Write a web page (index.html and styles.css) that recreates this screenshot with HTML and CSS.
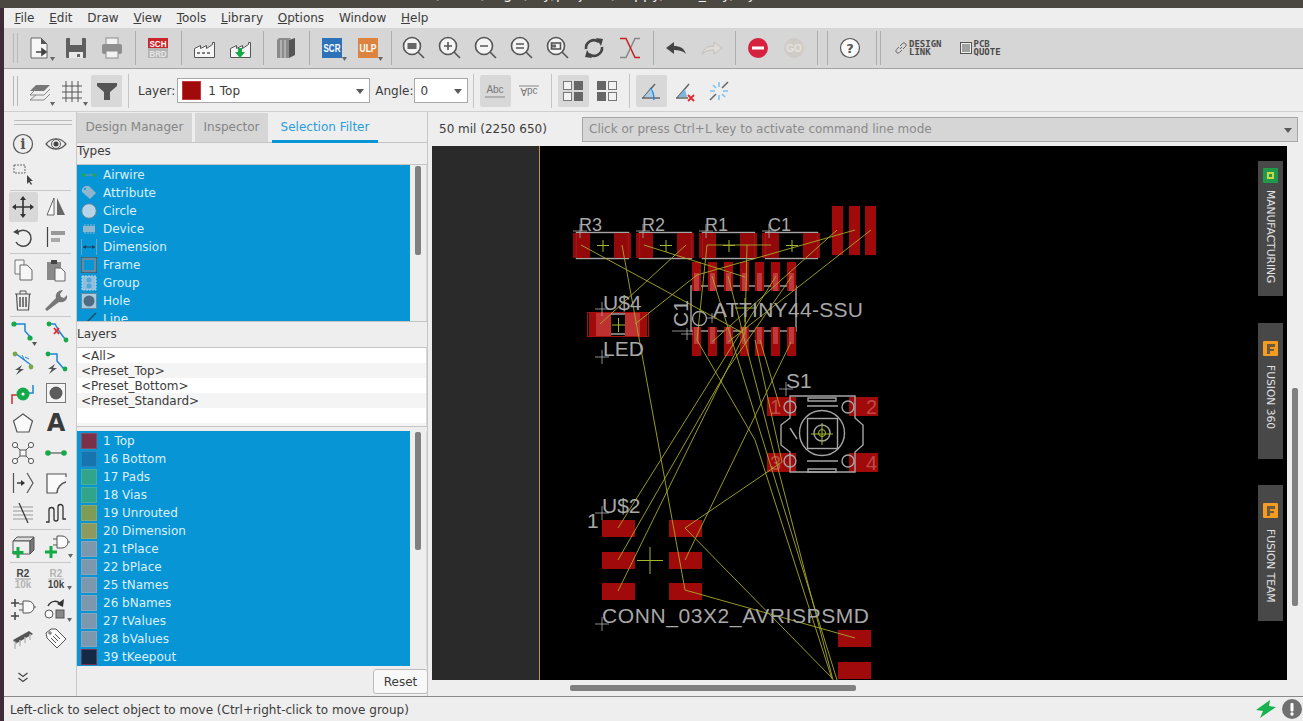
FILE: index.html
```html
<!DOCTYPE html>
<html lang="en">
<head>
  <meta charset="UTF-8">
  <title>Board - EAGLE</title>
  <link rel="stylesheet" href="styles.css">
</head>
<body>
  <div class="titlebar"><span>/home/eagle/my/projects/happy/hello_key/layout.brd - EAGLE</span></div>
  <div class="app">
    <div class="desktop-strip"></div>
    <div class="window">

      <div class="menubar">
        <span><u>F</u>ile</span><span><u>E</u>dit</span><span>Draw</span><span><u>V</u>iew</span><span><u>T</u>ools</span><span><u>L</u>ibrary</span><span><u>O</u>ptions</span><span>Window</span><span><u>H</u>elp</span>
      </div>

      <!-- main toolbar -->
      <div class="toolbar tb-main">
        <div class="grip"></div>
        <div class="tbtn"><svg viewBox="0 0 32 32"><path d="M7 6h10l6 6v14H7z" fill="#f7f7f7" stroke="#666"/><path d="M17 6v6h6z" fill="#555"/><path d="M12 20h9M18 17l4 3-4 3z" fill="#444" stroke="#444" stroke-width="1.600"/><path d="M26 25h5l-2.500 4z" fill="#666"/></svg></div>
        <div class="tbtn"><svg viewBox="0 0 32 32"><rect x="6" y="6" width="20" height="20" rx="1" fill="#5f5f5f"/><rect x="10" y="6" width="12" height="7" fill="#d6d6d6"/><rect x="9" y="20" width="14" height="6" fill="#e8e8e8"/><rect x="17" y="22" width="3" height="3" fill="#666"/></svg></div>
        <div class="tbtn"><svg viewBox="0 0 32 32"><rect x="10" y="6" width="12" height="7" fill="#f2f2f2" stroke="#8a8a8a"/><rect x="6" y="12" width="20" height="10" rx="2" fill="#8f8f8f"/><rect x="10" y="19" width="12" height="7" fill="#f2f2f2" stroke="#8a8a8a"/></svg></div>
        <div class="tsep"></div>
        <div class="tbtn"><svg viewBox="0 0 32 32"><rect x="6" y="6" width="20" height="10" fill="#c9252b"/><rect x="6" y="16" width="20" height="10" fill="#b5b5b5"/><text x="7.500" y="15" class="ico-txt" textLength="17" lengthAdjust="spacingAndGlyphs">SCH</text><text x="7.500" y="25" class="ico-txt ico-brd" textLength="17" lengthAdjust="spacingAndGlyphs">BRD</text></svg></div>
        <div class="tsep"></div>
        <div class="tbtn"><svg viewBox="0 0 32 32"><path d="M6.500 25.500v-9l6 -3v3l6-3v3l6-4v-2h2v15z" fill="#f5f5f5" stroke="#555"/><path d="M9 21h3M14 21h3M19 21h3" stroke="#555" stroke-width="1.500"/></svg></div>
        <div class="tbtn"><svg viewBox="0 0 32 32"><path d="M6.500 25.500v-9l6 -3v3l6-3v3l6-4v-2h2v15z" fill="#f5f5f5" stroke="#555"/><path d="M14 16h4v4h3l-5 6-5-6h3z" fill="#16a94a"/></svg></div>
        <div class="tsep"></div>
        <div class="tbtn"><svg viewBox="0 0 32 32"><path d="M7 8l2-2h12l-2 2zM7 8h12v18H7z" fill="#8b8b8b"/><path d="M11 8v18M15 8v18" stroke="#d6d6d6"/><path d="M19 8l6-2v17l-6 3z" fill="#555"/></svg></div>
        <div class="tsep"></div>
        <div class="tbtn"><svg viewBox="0 0 32 32"><rect x="6" y="6" width="20" height="20" fill="#2c72b9"/><text x="7.500" y="20" class="ico-txt ico-txt-lg" textLength="17" lengthAdjust="spacingAndGlyphs">SCR</text><path d="M26 25h5l-2.500 4z" fill="#666"/></svg></div>
        <div class="tbtn"><svg viewBox="0 0 32 32"><rect x="6" y="6" width="20" height="20" fill="#dd8340"/><text x="7.500" y="20" class="ico-txt ico-txt-lg" textLength="17" lengthAdjust="spacingAndGlyphs">ULP</text><path d="M26 25h5l-2.500 4z" fill="#666"/></svg></div>
        <div class="tsep"></div>
        <div class="tbtn"><svg viewBox="0 0 32 32" class="zoom"><circle cx="14" cy="14" r="8.500"/><path d="M20 20l6 6"/><rect x="9.500" y="11" width="9" height="6" fill="#666" stroke="none"/></svg></div>
        <div class="tbtn"><svg viewBox="0 0 32 32" class="zoom"><circle cx="14" cy="14" r="8.500"/><path d="M20 20l6 6M10 14h8M14 10v8"/></svg></div>
        <div class="tbtn"><svg viewBox="0 0 32 32" class="zoom"><circle cx="14" cy="14" r="8.500"/><path d="M20 20l6 6M10 14h8"/></svg></div>
        <div class="tbtn"><svg viewBox="0 0 32 32" class="zoom"><circle cx="14" cy="14" r="8.500"/><path d="M20 20l6 6M10 12h8M10 16h8"/></svg></div>
        <div class="tbtn"><svg viewBox="0 0 32 32" class="zoom"><circle cx="14" cy="14" r="8.500"/><path d="M20 20l6 6"/><rect x="9.500" y="11" width="9" height="6" fill="#f2f2f2" stroke="#555"/><rect x="10" y="12.500" width="4" height="3" fill="#666" stroke="none"/><path d="M26 25h5l-2.500 4z" fill="#666" stroke="none"/></svg></div>
        <div class="tbtn"><svg viewBox="0 0 32 32"><path d="M8 17a8 8 0 0 1 13-7" fill="none" stroke="#444" stroke-width="2.600"/><path d="M18 6l7 1-2 7z" fill="#444"/><path d="M24 15a8 8 0 0 1-13 7" fill="none" stroke="#444" stroke-width="2.600"/><path d="M14 26l-7-1 2-7z" fill="#444"/></svg></div>
        <div class="tbtn"><svg viewBox="0 0 32 32" fill="none" stroke-width="1.500"><path d="M26 6.500h-5l-9 19H6" stroke="#888"/><path d="M6 6.500h6l9 19h5" stroke="#c5211f"/></svg></div>
        <div class="tsep"></div>
        <div class="tbtn"><svg viewBox="0 0 32 32"><path d="M6 16l8-6v4c6 0 10 2 12 8-3-3-7-4-12-4v4z" fill="#444"/></svg></div>
        <div class="tbtn"><svg viewBox="0 0 32 32"><path d="M26 16l-8-6v4c-6 0-10 2-12 8 3-3 7-4 12-4v4z" fill="#dedbd6" stroke="#c4c1bb"/></svg></div>
        <div class="tsep"></div>
        <div class="tbtn"><svg viewBox="0 0 32 32"><circle cx="16" cy="16" r="10" fill="#d6213f"/><rect x="10" y="14.500" width="12" height="3" fill="#fff"/></svg></div>
        <div class="tbtn"><svg viewBox="0 0 32 32"><circle cx="16" cy="16" r="10" fill="#cfcbc6"/><text x="16" y="19.500" class="ico-go">GO</text></svg></div>
        <div class="tsep"></div>
        <div class="tsep"></div>
        <div class="tbtn"><svg viewBox="0 0 32 32"><circle cx="16" cy="16" r="9.500" fill="#fafafa" stroke="#555" stroke-width="1.200"/><text x="16" y="20.500" class="ico-help">?</text></svg></div>
        <div class="tsep tsep-thin tsep-first"></div>
        <div class="tsep tsep-thin"></div>
        <div class="textlink link-first">
          <svg viewBox="0 0 14 14"><path d="M6 8l2-2M5 6L2.500 8.500a2 2 0 0 0 3 3L8 9M6 5l2.500-2.500a2 2 0 0 1 3 3L9 8" fill="none" stroke="#666"/></svg>
          <span>DESIGN<br>LINK</span>
        </div>
        <div class="textlink">
          <svg viewBox="0 0 14 14"><rect x="1.500" y="1.500" width="11" height="11" fill="#eee" stroke="#555"/><path d="M3 4h8M3 6h8M3 8h8M3 10h8" stroke="#555"/></svg>
          <span>PCB<br>QUOTE</span>
        </div>
      </div>

      <!-- context toolbar -->
      <div class="toolbar tb-context">
        <div class="grip"></div>
        <div class="tbtn"><svg viewBox="0 0 32 32"><path d="M6 16l6-6h14l-6 6z" fill="#777"/><path d="M6 20l6-6M6 20h14l6-6M6 25l6-5M6 25h14l6-6" fill="none" stroke="#888"/><path d="M26 27h5l-2.500 4z" fill="#666"/></svg></div>
        <div class="tbtn tbtn-grid"><svg viewBox="0 0 32 32"><path d="M6 11h20M6 17h20M6 23h20M10 6v21M16 6v21M22 6v21" stroke="#555"/><path d="M27 27h5l-2.500 4z" fill="#666"/></svg></div>
        <div class="tbtn tbtn-on tbtn-filter"><svg viewBox="0 0 32 32"><path d="M6 8h20v3l-7 6v8h-6v-8l-7-6z" fill="#555"/></svg></div>
        <div class="tsep tsep-ctx tsep-a"></div>
        <label class="ctx-label">Layer:</label>
        <div class="combo combo-layer"><i class="layer-chip"></i><span>1 Top</span><b></b></div>
        <label class="ctx-label">Angle:</label>
        <div class="combo combo-angle"><span>0</span><b></b></div>
        <div class="tsep tsep-ctx"></div>
        <div class="tbtn tbtn-on"><svg viewBox="0 0 32 32"><text x="16" y="18" class="ico-abc">Abc</text><path d="M6 22h20" stroke="#888"/></svg></div>
        <div class="tbtn"><svg viewBox="0 0 32 32"><text x="16" y="-13" class="ico-abc" transform="scale(1 -1)">Abc</text><path d="M6 11h20" stroke="#888"/></svg></div>
        <div class="tsep tsep-ctx tsep-b"></div>
        <div class="tbtn tbtn-on"><svg viewBox="0 0 32 32" class="quad"><rect x="6.500" y="6.500" width="8" height="8"/><rect x="17" y="6" width="9" height="9" class="q-f"/><rect x="6.500" y="17.500" width="8" height="8"/><rect x="17" y="17" width="9" height="9" class="q-f"/></svg></div>
        <div class="tbtn"><svg viewBox="0 0 32 32" class="quad"><rect x="6" y="6" width="9" height="9" class="q-f"/><rect x="17.500" y="6.500" width="8" height="8"/><rect x="6" y="17" width="9" height="9" class="q-f"/><rect x="17.500" y="17.500" width="8" height="8"/></svg></div>
        <div class="tsep tsep-ctx tsep-b"></div>
        <div class="tbtn tbtn-on"><svg viewBox="0 0 32 32" fill="none"><path d="M7 23h18M8 23L20 9" stroke="#666" stroke-width="1.500"/><path d="M15 13c3 3 4 6 4 12" stroke="#1c8fe0" stroke-width="1.500"/><path d="M9 22l7-8 2 8z" fill="#a9cde8"/></svg></div>
        <div class="tbtn"><svg viewBox="0 0 32 32" fill="none"><path d="M7 23h12M8 23L20 9" stroke="#666" stroke-width="1.500"/><path d="M9 22l7-8 2 8z" fill="#7fb6e0"/><path d="M19 20l6 6M25 20l-6 6" stroke="#e8262c" stroke-width="1.800"/></svg></div>
        <div class="tbtn tbtn-tight"><svg viewBox="0 0 32 32" fill="none"><path d="M7 25l6-6M19 13l6-6" stroke="#666" stroke-width="1.500"/><path d="M16 7v5M16 20v5M7 16h5M20 16h5M10 10l3 3M19 19l3 3" stroke="#7ec0ee" stroke-width="1.500"/></svg></div>
      </div>

      <div class="workspace">

        <!-- command buttons -->
        <div class="tools">
          <div class="tools-grip"></div>
          <div class="tool-grid">
            <div class="tool"><svg viewBox="0 0 28 28"><circle cx="14" cy="14" r="9.500" fill="none" stroke="#555" stroke-width="1.200"/><text x="14" y="19" class="ico-i">i</text></svg></div>
            <div class="tool"><svg viewBox="0 0 28 28"><path d="M4 14c6-7 14-7 20 0-6 7-14 7-20 0z" fill="none" stroke="#555" stroke-width="1.200"/><circle cx="14" cy="14" r="4.500" fill="none" stroke="#555"/><circle cx="14" cy="14" r="2.500" fill="#444"/></svg></div>
            <div class="tool"><svg viewBox="0 0 28 28"><rect x="5" y="5" width="11" height="8" fill="none" stroke="#666" stroke-dasharray="2 1"/><path d="M18 15v9l2-2 2 3 1-1-2-3h3z" fill="#444"/></svg></div>
            <div class="tool"></div>
            <div class="tool-sep"></div>
            <div class="tool tool-on"><svg viewBox="0 0 28 28"><path d="M5 14h18M14 5v18" stroke="#333" stroke-width="1.600"/><path d="M14 3l3 4h-6zM14 25l3-4h-6zM3 14l4-3v6zM25 14l-4-3v6z" fill="#333"/></svg></div>
            <div class="tool"><svg viewBox="0 0 28 28"><path d="M12 5v17H5z" fill="#fafafa" stroke="#666"/><path d="M15 5v17h8z" fill="#666"/></svg></div>
            <div class="tool"><svg viewBox="0 0 28 28"><path d="M8 10a8 8 0 1 1-1 9" fill="none" stroke="#444" stroke-width="1.500"/><path d="M4 9l5-3 1 6z" fill="#444"/></svg></div>
            <div class="tool"><svg viewBox="0 0 28 28"><path d="M5.500 4v20" stroke="#444" stroke-width="1.200"/><rect x="9" y="8" width="14" height="4" fill="#999"/><rect x="9" y="15" width="9" height="4" fill="#aaa"/></svg></div>
            <div class="tool-sep"></div>
            <div class="tool"><svg viewBox="0 0 28 28"><path d="M6 4h9l0 14H6z" fill="#f6f6f6" stroke="#777"/><path d="M11 9h7l5 5v10H11z" fill="#f6f6f6" stroke="#666"/></svg></div>
            <div class="tool"><svg viewBox="0 0 28 28"><rect x="5" y="6" width="14" height="18" fill="#8a8a8a"/><rect x="9" y="4" width="6" height="4" fill="#444"/><path d="M13 12h6l4 4v9H13z" fill="#f6f6f6" stroke="#666"/></svg></div>
            <div class="tool"><svg viewBox="0 0 28 28" fill="none" stroke="#555"><path d="M6 8h16M11 8V5h6v3"/><path d="M7.500 8l1 16h11l1-16" stroke-width="1.200"/><path d="M11 11v10M14 11v10M17 11v10" stroke-width="1.500"/></svg></div>
            <div class="tool"><svg viewBox="0 0 28 28"><path d="M5 25l-2-2 11-11c-1-4 2-8 7-8l-3 4 1 3 3 1 3-3c1 5-3 8-8 7z" fill="#777"/></svg></div>
            <div class="tool-sep"></div>
            <div class="tool"><svg viewBox="0 0 28 28"><path d="M5 5h11v7l7 8" fill="none" stroke="#1c86d8" stroke-width="1.500"/><circle cx="5" cy="5" r="2.600" fill="#16a94a"/><circle cx="21" cy="19" r="2.600" fill="#16a94a"/><path d="M23 23h5l-2.500 4z" fill="#555"/></svg></div>
            <div class="tool"><svg viewBox="0 0 28 28"><path d="M7 5h6l4 7 6 8" fill="none" stroke="#1c86d8" stroke-width="1.500"/><circle cx="7" cy="5" r="2.400" fill="#16a94a"/><circle cx="24" cy="21" r="2.400" fill="#16a94a"/><path d="M12 9l5 6M17 9l-5 6" stroke="#e8262c" stroke-width="1.800"/></svg></div>
            <div class="tool"><svg viewBox="0 0 28 28"><path d="M6 4l8 6 8 6" fill="none" stroke="#1c86d8" stroke-width="1.300"/><circle cx="6" cy="5" r="2.400" fill="#77a84a"/><circle cx="22" cy="18" r="2.400" fill="#77a84a"/><path d="M13 6l3 6M16 8l4 2" stroke="#1c86d8"/><path d="M13 16l-7 5 4 0-3 5 8-6-4 0z" fill="#555"/></svg></div>
            <div class="tool"><svg viewBox="0 0 28 28"><path d="M6 5h9v7l7 8" fill="none" stroke="#1c86d8" stroke-width="1.500"/><circle cx="6" cy="5" r="2.400" fill="#16a94a"/><circle cx="23" cy="20" r="2.400" fill="#16a94a"/><path d="M13 15l-7 5 4 0-3 5 8-6-4 0z" fill="#555"/></svg></div>
            <div class="tool"><svg viewBox="0 0 28 28"><path d="M3 25v-9h7" fill="none" stroke="#c4332f" stroke-width="1.500"/><path d="M18 14h6V6" fill="none" stroke="#1c86d8" stroke-width="1.500"/><circle cx="14" cy="15" r="6.500" fill="#16a94a"/><circle cx="14" cy="15" r="1.600" fill="#fff"/></svg></div>
            <div class="tool"><svg viewBox="0 0 28 28"><rect x="4.500" y="4.500" width="19" height="19" fill="#f5f5f5" stroke="#777"/><circle cx="14" cy="14" r="6.500" fill="#5c5c5c"/></svg></div>
            <div class="tool"><svg viewBox="0 0 28 28"><path d="M14 5l9.500 7-3.500 11H8L4.500 12z" fill="#fafafa" stroke="#555" stroke-width="1.200"/></svg></div>
            <div class="tool tool-a">A</div>
            <div class="tool"><svg viewBox="0 0 28 28" fill="none" stroke="#555"><path d="M7 7l7 7 7-7M7 21l7-7 7 7"/><rect x="11" y="11" width="6" height="6" fill="#fafafa"/><circle cx="6" cy="6" r="2.600" fill="#fafafa"/><circle cx="22" cy="6" r="2.600" fill="#fafafa"/><circle cx="6" cy="22" r="2.600" fill="#fafafa"/><circle cx="22" cy="22" r="2.600" fill="#fafafa"/></svg></div>
            <div class="tool"><svg viewBox="0 0 28 28"><path d="M6 14h16" stroke="#777" stroke-width="1.500"/><circle cx="6" cy="14" r="2.800" fill="#16a94a"/><circle cx="22" cy="14" r="2.800" fill="#16a94a"/></svg></div>
            <div class="tool"><svg viewBox="0 0 28 28" fill="none" stroke="#555"><path d="M4.500 4v20M18 4l6 10-6 10" stroke-width="1.200"/><path d="M8 14h7" stroke="#333" stroke-width="1.400"/><path d="M12 11l4 3-4 3z" fill="#333" stroke="none"/></svg></div>
            <div class="tool"><svg viewBox="0 0 28 28" fill="none" stroke="#555"><path d="M24 8V5H5v19h10" fill="#fafafa" stroke-width="1.200"/><path d="M15 24c0-5 4-10 9-11" stroke-width="1.600"/></svg></div>
            <div class="tool"><svg viewBox="0 0 28 28" fill="none" stroke="#999"><path d="M4 8h20M4 12h20M4 16h20M4 20h20"/><path d="M10 4l9 20" stroke="#333" stroke-width="1.200"/></svg></div>
            <div class="tool"><svg viewBox="0 0 28 28"><path d="M4 23h3V11a2.500 2.500 0 0 1 5 0v9a2 2 0 0 0 4 0V8a2.500 2.500 0 0 1 5 0v12h3" fill="none" stroke="#333" stroke-width="1.300"/></svg></div>
            <div class="tool-sep"></div>
            <div class="tool"><svg viewBox="0 0 28 28"><path d="M4 9l4-4h17l-4 4z" fill="#ddd" stroke="#555"/><path d="M4 9h17v13H4z" fill="#eee" stroke="#555"/><path d="M21 9l4-4v13l-4 4z" fill="#777" stroke="#555"/><path d="M9 15v11M3.500 20.500h11" stroke="#16a94a" stroke-width="3"/></svg></div>
            <div class="tool"><svg viewBox="0 0 28 28"><path d="M15 4h5a6 6 0 0 1 0 12h-5z" fill="#fafafa" stroke="#555"/><path d="M11 7h4M11 13h4M26 10h2" stroke="#555"/><path d="M9 14v12M3 20h12" stroke="#16a94a" stroke-width="3"/><path d="M26 22h5l-2.500 4z" fill="#666"/></svg></div>
            <div class="tool-sep"></div>
            <div class="tool"><svg viewBox="0 0 28 28"><text x="14" y="12" class="ico-r2">R2</text><path d="M6 14h16" stroke="#999"/><text x="14" y="23" class="ico-r2 ico-r2-dim">10k</text></svg></div>
            <div class="tool"><svg viewBox="0 0 28 28"><text x="14" y="12" class="ico-r2 ico-r2-dim">R2</text><path d="M6 14h16" stroke="#bbb"/><text x="14" y="23" class="ico-r2">10k</text><path d="M25 21h5l-2.500 4z" fill="#666"/></svg></div>
            <div class="tool"><svg viewBox="0 0 28 28"><path d="M14 6h5a6 6 0 0 1 0 12h-5z" fill="#fafafa" stroke="#555"/><path d="M10 9h4M10 15h4M25 12h2" stroke="#555"/><path d="M6 4v8M2 8h8M6 17v8M2 21h8" stroke="#444" stroke-width="1.500"/></svg></div>
            <div class="tool"><svg viewBox="0 0 28 28"><circle cx="7" cy="19" r="4" fill="#fafafa" stroke="#555"/><rect x="14" y="15" width="8" height="8" fill="#888" stroke="#555"/><path d="M6 11c3-6 10-6 13-1" fill="none" stroke="#333" stroke-width="1.500"/><path d="M22 4l-1 8-6-3z" fill="#333"/><path d="M25 23h5l-2.500 4z" fill="#666"/></svg></div>
            <div class="tool"><svg viewBox="0 0 28 28"><path d="M4 15L20 6l4 3-16 9z" fill="#555"/><path d="M4 15l4 3v1L4 16z" fill="#888"/><path d="M6 18v6M11 15v6M16 12v6M21 9v6" stroke="#bbb" stroke-width="1.500"/></svg></div>
            <div class="tool"><svg viewBox="0 0 28 28" fill="none" stroke="#555"><path d="M4 8l5-4h5l10 10-9 9L5 13z" fill="#fafafa"/><circle cx="8" cy="8" r="1.200"/><path d="M11 11l5 5M13 9l5 5M9 13l5 5"/></svg></div>
          </div>
          <div class="tools-more"><svg viewBox="0 0 12 12" fill="none" stroke="#444" stroke-width="1.200"><path d="M1.500 2l4.500 3.500L10.500 2M1.500 7l4.500 3.500L10.500 7"/></svg></div>
        </div>

        <!-- side panel -->
        <div class="panel">
          <div class="tabs">
            <div class="tab">Design Manager</div>
            <div class="tab tab-ins">Inspector</div>
            <div class="tab tab-on">Selection Filter</div>
          </div>

          <div class="sec-head sec-types">Types</div>
          <div class="list-wrap list-types">
            <div class="list">
              <div class="row"><svg viewBox="0 0 16 16"><path d="M2 8h12" stroke="#7c9aa8"/><circle cx="2.500" cy="8" r="2" fill="#1aa55e"/><circle cx="13.500" cy="8" r="2" fill="#1aa55e"/></svg>Airwire</div>
              <div class="row"><svg viewBox="0 0 16 16"><path d="M1 4l3-3h4l7 7-6 6-8-7z" fill="#8fb6cc"/><circle cx="4" cy="4" r="1" fill="#0795d6"/></svg>Attribute</div>
              <div class="row"><svg viewBox="0 0 16 16"><circle cx="8" cy="8" r="7.300" fill="#b6d5e8" stroke="#5e8197"/></svg>Circle</div>
              <div class="row"><svg viewBox="0 0 16 16"><rect x="2" y="5" width="12" height="6" fill="#8fb6cc"/><path d="M4 3v10M7 3v10M10 3v10M13 3v10" stroke="#8fb6cc"/></svg>Device</div>
              <div class="row"><svg viewBox="0 0 16 16"><path d="M0.500 0v16M15.500 0v16" stroke="#6ea3c0"/><path d="M2 8h12" stroke="#1d4057"/><path d="M2 8l3-2v4zM14 8l-3-2v4z" fill="#1d4057"/></svg>Dimension</div>
              <div class="row"><svg viewBox="0 0 16 16"><rect x="1.500" y="1.500" width="13" height="13" fill="#0795d6" stroke="#6d8a9c" stroke-width="3"/><rect x="0" y="0" width="16" height="16" fill="none" stroke="#24445a"/></svg>Frame</div>
              <div class="row"><svg viewBox="0 0 16 16"><rect x="1" y="1" width="14" height="14" fill="#8fbfdc" stroke="#b8d4e4" stroke-dasharray="2 1"/><circle cx="8" cy="5" r="2.500" fill="#4fa8d8"/><circle cx="8" cy="11" r="2.500" fill="#4fa8d8"/></svg>Group</div>
              <div class="row"><svg viewBox="0 0 16 16"><rect x="0.500" y="0.500" width="15" height="15" fill="#a9c9dc" stroke="#6d8a9c"/><circle cx="8" cy="8" r="5.500" fill="#4f6c82"/></svg>Hole</div>
              <div class="row"><svg viewBox="0 0 16 16"><path d="M2 15L15 2" stroke="#24445a" stroke-width="1.200"/></svg>Line</div>
            </div>
            <div class="vscroll"><i class="thumb thumb-types"></i></div>
          </div>

          <div class="splitter"></div>
          <div class="sec-head sec-layers">Layers</div>
          <div class="presets">
            <div>&lt;All&gt;</div>
            <div>&lt;Preset_Top&gt;</div>
            <div>&lt;Preset_Bottom&gt;</div>
            <div>&lt;Preset_Standard&gt;</div>
          </div>
          <div class="splitter splitter-2"></div>

          <div class="list-wrap list-layers">
            <div class="list">
              <div class="row"><i class="sw sw-top"></i>1 Top</div>
              <div class="row"><i class="sw sw-bot"></i>16 Bottom</div>
              <div class="row"><i class="sw sw-pad"></i>17 Pads</div>
              <div class="row"><i class="sw sw-pad"></i>18 Vias</div>
              <div class="row"><i class="sw sw-unr"></i>19 Unrouted</div>
              <div class="row"><i class="sw sw-dim"></i>20 Dimension</div>
              <div class="row"><i class="sw sw-grey"></i>21 tPlace</div>
              <div class="row"><i class="sw sw-grey"></i>22 bPlace</div>
              <div class="row"><i class="sw sw-grey"></i>25 tNames</div>
              <div class="row"><i class="sw sw-grey"></i>26 bNames</div>
              <div class="row"><i class="sw sw-grey"></i>27 tValues</div>
              <div class="row"><i class="sw sw-grey"></i>28 bValues</div>
              <div class="row"><i class="sw sw-keep"></i>39 tKeepout</div>
            </div>
            <div class="vscroll"><i class="thumb thumb-layers"></i></div>
          </div>
          <div class="panel-foot"><button class="reset">Reset</button></div>
        </div>

        <!-- board editor -->
        <div class="editor">
          <div class="cmdbar">
            <span class="coords">50 mil (2250 650)</span>
            <div class="cmdline"><span>Click or press Ctrl+L key to activate command line mode</span><b></b></div>
          </div>
          <div class="canvas-row">
            <div class="canvas">
              <svg class="board" viewBox="432 146 855 534">
                <rect x="432" y="146" width="107" height="534" fill="#2a2a2a"/>
                <path d="M539.500 146v534" stroke="#b4975a"/>

                <defs>
                  <g id="smd">
                    <rect x="576.500" y="232.500" width="52" height="26" fill="none" stroke="#a5a5a5" stroke-width="1.400"/>
                    <rect x="573" y="233" width="17" height="25" class="pad-t"/>
                    <rect x="614" y="233" width="17" height="25" class="pad-t"/>
                    <path d="M597 245.500h12M603 240v12" class="cross"/>
                  </g>
                </defs>
                <use href="#smd"/>
                <use href="#smd" x="63"/>
                <use href="#smd" x="126"/>
                <use href="#smd" x="189"/>

                <rect x="832" y="206" width="11" height="49" class="pad"/>
                <rect x="849" y="206" width="11" height="49" class="pad"/>
                <rect x="865" y="206" width="11" height="49" class="pad"/>

                <!-- ATTINY44 -->
                <rect x="691" y="286" width="105" height="45" class="outline"/>
                <g class="pad">
                  <rect x="692" y="262" width="9" height="29"/><rect x="708" y="262" width="9" height="29"/><rect x="724" y="262" width="9" height="29"/><rect x="740" y="262" width="9" height="29"/><rect x="755" y="262" width="9" height="29"/><rect x="771" y="262" width="9" height="29"/><rect x="787" y="262" width="9" height="29"/>
                  <rect x="692" y="327" width="9" height="29"/><rect x="708" y="327" width="9" height="29"/><rect x="724" y="327" width="9" height="29"/><rect x="740" y="327" width="9" height="29"/><rect x="755" y="327" width="9" height="29"/><rect x="771" y="327" width="9" height="29"/><rect x="787" y="327" width="9" height="29"/>
                </g>
                <g class="pad-hi">
                  <rect x="694" y="273" width="5" height="18"/><rect x="710" y="273" width="5" height="18"/><rect x="726" y="273" width="5" height="18"/><rect x="742" y="273" width="5" height="18"/><rect x="757" y="273" width="5" height="18"/><rect x="773" y="273" width="5" height="18"/><rect x="789" y="273" width="5" height="18"/>
                  <rect x="694" y="327" width="5" height="17"/><rect x="710" y="327" width="5" height="17"/><rect x="726" y="327" width="5" height="17"/><rect x="742" y="327" width="5" height="17"/><rect x="757" y="327" width="5" height="17"/><rect x="773" y="327" width="5" height="17"/><rect x="789" y="327" width="5" height="17"/>
                </g>
                <circle cx="699.500" cy="318.500" r="7" class="outline"/>
                <path d="M672 331h21M681 334h12M687 328v12M707 318h10M712 313v10" class="thin"/>
                <path d="M735 308h22M745 298v24" class="cross"/>

                <!-- LED -->
                <rect x="587.500" y="312.500" width="61" height="24" fill="none" stroke="#a80f0f"/>
                <rect x="589" y="313" width="7" height="23" class="pad"/>
                <rect x="640" y="313" width="7" height="23" class="pad"/>
                <rect x="596" y="313" width="15" height="23" class="pad-soft"/>
                <rect x="625" y="313" width="15" height="23" class="pad-soft"/>
                <path d="M611 314h14M611 334h14" stroke="#a5a5a5" stroke-width="1.600"/>
                <path d="M612 325h13M618.500 318v14" class="cross"/>

                <!-- S1 -->
                <rect x="767" y="397" width="29" height="19" class="pad"/>
                <rect x="849" y="397" width="29" height="19" class="pad"/>
                <rect x="767" y="453" width="29" height="19" class="pad"/>
                <rect x="849" y="453" width="29" height="19" class="pad"/>
                <g class="outline">
                  <path d="M790 396H855V418l8 7v20l-8 7V472H790V452l-9-7V425l9-7Z"/>
                  <circle cx="790" cy="407" r="6"/><circle cx="848" cy="407" r="6"/><circle cx="790" cy="461" r="6"/><circle cx="848" cy="461" r="6"/>
                  <circle cx="822" cy="433" r="22.500"/>
                  <rect x="807.500" y="418.500" width="30" height="30"/>
                  <path d="M807 406h31M807 461h31M808 398h28v3h-28zM808 469h28v3h-28zM790 428l7 11"/>
                  <circle cx="822" cy="433" r="8"/>
                </g>
                <circle cx="822" cy="433" r="3.500" fill="none" stroke="#a8c030"/>
                <path d="M811 434h22M822 423v22" class="cross"/>
                <text x="770" y="414" class="ref-dim">1</text>
                <text x="866" y="414" class="ref-dim">2</text>
                <text x="770" y="470" class="ref-dim">3</text>
                <text x="866" y="470" class="ref-dim">4</text>

                <!-- U$2 -->
                <g class="pad">
                  <rect x="602" y="520" width="33" height="17"/><rect x="602" y="552" width="33" height="17"/><rect x="602" y="583" width="33" height="17"/>
                  <rect x="669" y="520" width="33" height="17"/><rect x="669" y="552" width="33" height="17"/><rect x="669" y="583" width="33" height="17"/>
                  <rect x="838" y="630" width="33" height="17"/><rect x="838" y="662" width="33" height="17"/>
                </g>
                <path d="M637 560.500h26M650 547v27" class="cross"/>

                <path class="airwire" d="M581 245L743 333M622 245L685 590L855 638M644 245L745 277M686 245L600 324M707 245H771M707 245L697 340L755 440L832 679M747 245L745 333M855 230L697 275L635 324M837 230L712 342M871 230L728 342M712 276L837 680M728 276L833 680M776 276L618 528M792 276L727 370L618 560M745 333L618 591M755 340L782 462L685 528L832 678M760 340L780 407M791 342L685 560"/>

                <g class="labels">
                  <text x="579" y="231">R3</text><text x="642" y="231">R2</text><text x="705" y="231">R1</text><text x="768" y="231">C1</text>
                  <text x="603" y="310" class="lbl-m">U$4</text>
                  <text x="603" y="356" class="lbl-m">LED</text>
                  <text x="713" y="317" class="lbl-m" textLength="150">ATTINY44-SSU</text>
                  <text x="0" y="0" class="lbl-m" transform="translate(688 327) rotate(-90)">C1</text>
                  <text x="786" y="388" class="lbl-m">S1</text>
                  <text x="602" y="513" class="lbl-m">U$2</text>
                  <text x="587" y="528" class="lbl-m">1</text>
                  <text x="602" y="623" class="lbl-m" textLength="267">CONN_03X2_AVRISPSMD</text>
                </g>
                <path class="thin" d="M573 231h14M580 224v14M636 231h14M643 224v14M699 231h14M706 224v14M762 231h14M769 224v14M595 309h14M602 302v14M595 357h14M602 350v14M779 389h14M786 382v14M595 513h14M602 506v14M595 624h14M602 617v14"/>
              </svg>

              <div class="side-tabs">
                <div class="side-tab st-mfg">
                  <svg viewBox="0 0 15 15"><rect width="15" height="15" rx="1" fill="#1f9a4a"/><rect x="4" y="4" width="7" height="7" fill="#c7d84a"/><rect x="6" y="6" width="3" height="3" fill="#1f9a4a"/></svg>
                  <span>MANUFACTURING</span>
                </div>
                <div class="side-tab st-360">
                  <svg viewBox="0 0 15 15"><rect width="15" height="15" rx="1" fill="#f39c1f"/><path d="M4 3h8v3H7v2h4v2H7v3H4z" fill="#6b5a3e"/></svg>
                  <span>FUSION 360</span>
                </div>
                <div class="side-tab st-team">
                  <svg viewBox="0 0 15 15"><rect width="15" height="15" rx="1" fill="#f39c1f"/><path d="M4 3h8v3H7v2h4v2H7v3H4z" fill="#6b5a3e"/></svg>
                  <span>FUSION TEAM</span>
                </div>
              </div>
            </div>
            <div class="canvas-vscroll"><i></i></div>
          </div>
          <div class="canvas-hscroll"><i></i></div>
        </div>
      </div>

      <div class="statusbar">
        <span>Left-click to select object to move (Ctrl+right-click to move group)</span>
        <div class="status-icons">
          <svg viewBox="0 0 20 20"><path d="M14 1L0 11l7 1-3 7 16-11-7-1z" fill="#18b34f"/></svg>
          <svg viewBox="0 0 20 20"><circle cx="10" cy="10" r="10" fill="#707070"/><rect x="8.500" y="4" width="3" height="8.500" rx="1" fill="#fff"/><circle cx="10" cy="15" r="1.700" fill="#fff"/></svg>
        </div>
      </div>

    </div>
  </div>
</body>
</html>
```

FILE: styles.css
```css
* {
  box-sizing: border-box;
}
html, body {
  margin: 0;
  padding: 0;
  height: 100%;
  overflow: hidden;
}
body {
  width: 1303px;
  height: 721px;
  display: flex;
  flex-direction: column;
  font-family: "DejaVu Sans", sans-serif;
  font-size: 12px;
  color: #3c3c3c;
  background-color: #eeeeee;
}

/* window frame */
.titlebar {
  height: 8px;
  flex: none;
  background-color: #4b4842;
  color: #f0f0f0;
  text-align: center;
  overflow: hidden;
  font-size: 14px;
  line-height: 1px;
}
.titlebar span {
  display: inline-block;
  transform: translateY(-6px);
}
.app {
  flex: 1;
  display: flex;
  min-height: 0;
}
.desktop-strip {
  width: 4px;
  flex: none;
  background-color: #3e2b35;
}
.window {
  flex: 1;
  min-width: 0;
  display: flex;
  flex-direction: column;
}

/* menu */
.menubar {
  height: 20px;
  flex: none;
  display: flex;
  align-items: center;
  padding-left: 3px;
  background-color: #eeeeee;
}
.menubar span {
  padding: 0 7.4px;
  white-space: nowrap;
}

/* toolbars */
.toolbar {
  display: flex;
  align-items: center;
  flex: none;
  padding-left: 8px;
}
.tb-main {
  height: 41px;
  background-color: #d6d6d6;
  border-bottom: 1px solid #a2a2a2;
}
.tb-context {
  height: 43px;
  padding-top: 1px;
  background-color: #eeeeee;
  border-bottom: 1px solid #d0d0d0;
}
.grip {
  width: 9px;
  height: 30px;
  flex: none;
  border-left: 1px solid #b9b9b9;
  margin-left: 1px;
}
.grip::after {
  content: "";
  display: block;
  width: 3px;
  height: 30px;
  border-left: 1px solid #b9b9b9;
  margin-left: 3px;
}
.tbtn {
  width: 36px;
  height: 32px;
  flex: none;
  display: flex;
  align-items: center;
  justify-content: center;
}
.tbtn svg {
  width: 32px;
  height: 32px;
  flex: none;
  overflow: visible;
}
.tbtn-grid {
  width: 28px;
}
.tbtn-on {
  width: 31px;
  margin-left: 2px;
  background-color: #d8d8d8;
  border-radius: 2px;
}
.tbtn-filter {
  margin-left: 5px;
}
.tbtn-tight {
  margin-left: -2px;
}
.tsep {
  width: 10px;
  height: 34px;
  flex: none;
  position: relative;
}
.tsep::after {
  content: "";
  position: absolute;
  left: 5px;
  top: 0;
  bottom: 0;
  border-left: 1px solid #adadad;
}
.tsep-thin {
  width: 4px;
}
.tsep-thin::after {
  left: 2px;
}
.tsep-first {
  margin-left: 6px;
}
.tsep-ctx::after {
  border-left-color: #c4c4c4;
}
.tsep-a {
  margin-left: 1px;
}
.tsep-b {
  margin-left: -1px;
}
.textlink {
  display: flex;
  align-items: center;
  gap: 1px;
  margin-right: 17px;
  font-family: "DejaVu Sans Mono", monospace;
  font-weight: bold;
  font-size: 9px;
  line-height: 8px;
  color: #4a4a4a;
}
.textlink svg {
  width: 14px;
  height: 14px;
}
.link-first {
  margin-left: 12px;
}
.ctx-label {
  margin-left: 5px;
  white-space: nowrap;
}
.combo {
  height: 25px;
  margin-left: 2px;
  display: flex;
  align-items: center;
  background-color: #fff;
  border: 1px solid #a8a8a8;
  position: relative;
}
.combo b, .cmdline b {
  position: absolute;
  right: 5px;
  top: 10px;
  border-left: 4px solid transparent;
  border-right: 4px solid transparent;
  border-top: 5px solid #5a5a5a;
}
.combo-layer {
  width: 193px;
  padding-left: 4px;
}
.combo-angle {
  width: 54px;
  margin-left: 0;
  padding-left: 6px;
}
.layer-chip {
  width: 19px;
  height: 19px;
  margin-right: 7px;
  background-color: #a00a0a;
  border: 1px solid #c23a3a;
}

/* svg icon text */
.ico-txt {
  font-family: "Liberation Sans", sans-serif;
  font-weight: bold;
  font-size: 9px;
  fill: #fff;
}
.ico-brd {
  fill: #e6e6e6;
}
.ico-txt-lg {
  font-size: 11px;
}
.ico-go {
  font-family: "Liberation Sans", sans-serif;
  font-weight: bold;
  fill: #e6e4e0;
  font-size: 10px;
  text-anchor: middle;
}
.ico-help {
  font-family: "DejaVu Sans", sans-serif;
  font-weight: bold;
  font-size: 13px;
  fill: #555;
  text-anchor: middle;
}
.ico-abc {
  font-family: "Liberation Sans", sans-serif;
  font-size: 10px;
  fill: #777;
  text-anchor: middle;
}
.ico-i {
  font-family: "DejaVu Serif", serif;
  font-weight: bold;
  font-size: 14px;
  fill: #555;
  text-anchor: middle;
}
.ico-r2 {
  font-family: "Liberation Sans", sans-serif;
  font-weight: bold;
  font-size: 10px;
  fill: #444;
  text-anchor: middle;
}
.ico-r2-dim {
  fill: #b4b4b4;
}
.zoom {
  fill: #f4f4f4;
  stroke: #555;
  stroke-width: 1.600;
}
.zoom path {
  fill: none;
}
.quad rect {
  fill: #f2f2f2;
  stroke: #777;
}
.quad .q-f {
  fill: #666;
  stroke: none;
}

/* main area */
.workspace {
  flex: 1;
  min-height: 0;
  display: flex;
}
.tools {
  width: 73px;
  flex: none;
  display: flex;
  flex-direction: column;
  padding-left: 2.5px;
  border-right: 1px solid #c8c8c8;
}
.tools-grip {
  height: 9px;
  flex: none;
  margin: 8px 4px 0 7px;
  border-top: 1px solid #bdbdbd;
}
.tools-grip::after {
  content: "";
  display: block;
  border-top: 1px solid #bdbdbd;
  margin-top: 3px;
}
.tool-grid {
  display: grid;
  grid-template-columns: 33px 33px;
  grid-auto-rows: auto;
}
.tool {
  height: 30px;
  display: flex;
  align-items: center;
  justify-content: center;
}
.tool svg {
  width: 28px;
  height: 28px;
  overflow: visible;
}
.tool-on {
  background-color: #d8d8d8;
  border-radius: 2px;
  width: 29px;
  margin-left: 2px;
}
.tool-a {
  font-weight: bold;
  font-size: 24px;
  color: #3a3a3a;
}
.tool-sep {
  grid-column: 1 / 3;
  height: 3px;
  margin: 0 2px 0 3px;
  border-top: 1px solid #c8c8c8;
  position: relative;
  top: 1px;
}
.tools-more {
  margin-top: auto;
  height: 30px;
  width: 33px;
  display: flex;
  justify-content: center;
}
.tools-more svg {
  width: 12px;
  height: 12px;
  margin-top: 5px;
}

/* side panel */
.panel {
  width: 351px;
  flex: none;
  display: flex;
  flex-direction: column;
  border-right: 1px solid #c6c6c6;
}
.tabs {
  height: 31px;
  flex: none;
  display: flex;
  padding-top: 1px;
  border-bottom: 1px solid #c4c4c4;
}
.tab {
  background-color: #d6d6d6;
  color: #858585;
  width: 115px;
  line-height: 28px;
  text-align: center;
  white-space: nowrap;
}
.tab-ins {
  margin-left: 3px;
  width: 73px;
}
.tab-on {
  background-color: #eeeeee;
  color: #2a9ddb;
  width: 106px;
  margin-left: 4px;
  border-bottom: 3px solid #0795d6;
  height: 30px;
}
.sec-head {
  flex: none;
  background-color: #eeeeee;
  border-bottom: 1px solid #c4c4c4;
}
.sec-types {
  height: 22px;
  line-height: 17px;
}
.sec-layers {
  height: 26px;
  line-height: 24px;
}
.list-wrap {
  flex: none;
  display: flex;
  overflow: hidden;
}
.list-types {
  height: 156px;
}
.list-layers {
  height: 235px;
}
.list {
  flex: 1;
  background-color: #0795d6;
  color: #dcf0fa;
  overflow: hidden;
  padding: 1px 0 0 1px;
}
.row {
  height: 18px;
  display: flex;
  align-items: center;
  white-space: nowrap;
}
.row svg {
  width: 16px;
  height: 16px;
  margin: 0 6px 0 3px;
  flex: none;
}
.sw {
  width: 16px;
  height: 16px;
  margin: 0 6px 0 3px;
  flex: none;
  border: 1px solid rgba(255, 255, 255, 0.12);
}
.sw-top { background-color: #7c3047; }
.sw-bot { background-color: #1674ae; }
.sw-pad { background-color: #31a48a; }
.sw-unr { background-color: #7f9c56; }
.sw-dim { background-color: #8e9a5d; }
.sw-grey { background-color: #7c98ae; }
.sw-keep {
  background-color: #142a44;
  border-color: #7c3047;
}
.vscroll {
  width: 17px;
  flex: none;
  background-color: #eeeeee;
  border-right: 1px solid #d8d8d8;
  padding: 1px 0 0 5px;
}
.thumb {
  display: block;
  width: 6px;
  background-color: #808080;
  border-radius: 2px;
}
.thumb-types {
  height: 89px;
}
.thumb-layers {
  height: 118px;
}
.splitter {
  height: 1px;
  flex: none;
  background-color: #c4c4c4;
}
.splitter-2 {
  height: 5px;
  background-color: #eeeeee;
  border-top: 1px solid #c4c4c4;
}
.presets {
  height: 78px;
  flex: none;
  padding: 1px 0 0 4px;
  border-right: 1px solid #d8d8d8;
  line-height: 15px;
  background-color: #fff;
  background-image: linear-gradient(#fff 15px, #f4f4f4 15px, #f4f4f4 30px, #fff 30px);
  background-size: 100% 30px;
}
.panel-foot {
  flex: 1;
  display: flex;
  justify-content: flex-end;
  align-items: flex-end;
  padding-bottom: 2px;
  margin-right: -1px;
}
.reset {
  width: 55px;
  height: 25px;
  font-family: inherit;
  font-size: 12px;
  color: #3c3c3c;
  background-color: #f8f8f8;
  border: 1px solid #bcbcbc;
  border-radius: 3px;
  padding: 0;
}

/* board editor */
.editor {
  flex: 1;
  min-width: 0;
  display: flex;
  flex-direction: column;
  padding-left: 4px;
}
.cmdbar {
  height: 34px;
  flex: none;
  display: flex;
  align-items: flex-start;
  padding: 5px 5px 0 7px;
}
.coords {
  width: 143px;
  flex: none;
  line-height: 25px;
  white-space: nowrap;
}
.cmdline {
  flex: 1;
  height: 25px;
  line-height: 23px;
  padding-left: 6px;
  background-color: #d6d6d6;
  border: 1px solid #a8a8a8;
  color: #8a8a8a;
  position: relative;
}
.canvas-row {
  flex: 1;
  min-height: 0;
  display: flex;
}
.canvas {
  width: 855px;
  flex: none;
  background-color: #000;
  position: relative;
}
.board {
  display: block;
  width: 855px;
  height: 534px;
}
.pad {
  fill: #a00a0a;
}
.pad-t {
  fill: #a00a0a;
  fill-opacity: 0.92;
}
.pad-hi {
  fill: #bd3a3a;
}
.pad-soft {
  fill: #bf3030;
}
.outline {
  fill: none;
  stroke: #a5a5a5;
  stroke-width: 1.400;
}
.cross {
  fill: none;
  stroke: #a3b82c;
  stroke-width: 1;
}
.thin {
  fill: none;
  stroke: #b0b0b0;
  stroke-width: 0.800;
}
.airwire {
  fill: none;
  stroke: #a9a92a;
  stroke-width: 0.900;
}
.labels text {
  font-family: "Liberation Sans", sans-serif;
  font-size: 18px;
  fill: #a8a8a8;
}
.labels .lbl-m {
  font-size: 21px;
}
.ref-dim {
  font-family: "Liberation Sans", sans-serif;
  font-size: 20px;
  fill: #c04848;
}
.side-tabs {
  position: absolute;
  left: 826px;
  top: 15px;
  display: flex;
  flex-direction: column;
  gap: 26px;
}
.side-tab {
  width: 25px;
  background-color: #484848;
  display: flex;
  flex-direction: column;
  align-items: center;
  color: #e0e0e0;
  font-size: 10.7px;
}
.side-tab svg {
  width: 15px;
  height: 15px;
  flex: none;
}
.side-tab span {
  writing-mode: vertical-rl;
  white-space: nowrap;
}
.st-mfg {
  height: 135px;
  margin-bottom: 1px;
  padding-top: 7px;
  gap: 7px;
}
.st-360 {
  height: 136px;
  padding-top: 18px;
  gap: 9px;
}
.st-team {
  height: 136px;
  padding-top: 18px;
  gap: 11px;
}
.canvas-vscroll {
  flex: 1;
  background-color: #eeeeee;
  padding: 242px 0 0 5px;
}
.canvas-vscroll i {
  display: block;
  width: 6px;
  height: 218px;
  background-color: #808080;
  border-radius: 2px;
}
.canvas-hscroll {
  height: 16px;
  flex: none;
  padding: 5px 0 0 138px;
}
.canvas-hscroll i {
  display: block;
  width: 286px;
  height: 6px;
  background-color: #808080;
  border-radius: 2px;
}

/* status */
.statusbar {
  height: 25px;
  flex: none;
  display: flex;
  align-items: center;
  justify-content: space-between;
  padding: 2px 0 0 6px;
  border-top: 1px solid #8a8a8a;
  background-color: #eeeeee;
}
.status-icons {
  display: flex;
  gap: 6px;
  padding-right: 1px;
  margin-top: -2px;
}
.status-icons svg {
  width: 20px;
  height: 20px;
}
```
